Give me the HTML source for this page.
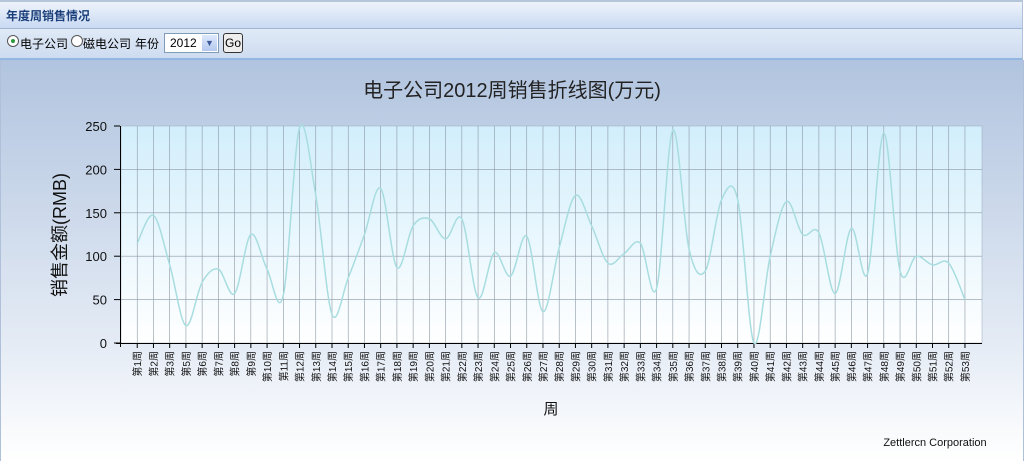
<!DOCTYPE html>
<html><head><meta charset="utf-8"><style>
body{margin:0;width:1024px;height:461px;overflow:hidden;font-family:"Liberation Sans","Noto Sans CJK SC",sans-serif;background:#fff;position:relative}
#hd{position:absolute;left:0;top:0;width:1022px;height:26px;background:linear-gradient(#eef3fb,#c9daf2);border-top:2px solid #b6c6da;border-bottom:1px solid #9fb5d2;border-right:1px solid #b0c0d8}
#hd span{position:absolute;left:6px;top:5px;font-size:12px;font-weight:bold;color:#1b3f7a}
#ctl{position:absolute;left:0;top:29px;width:1022px;height:29px;background:linear-gradient(#e0eaf7,#cedcf0);border-bottom:2px solid #94b6e2;border-right:1px solid #b0c0d8;font-size:12px;color:#000}
#ch{position:absolute;left:0;top:60px;width:1022px;height:401px;background:linear-gradient(#b1c4df,#e4ebf5 70%,#fff);border-left:1px solid #b0c0d8;border-right:1px solid #b0c0d8}
</style></head><body>
<div id="hd"><span>年度周销售情况</span></div>
<div id="ctl">
<div style="position:absolute;left:7px;top:6px;width:10px;height:10px;border:1px solid #555;border-radius:50%;background:#fff"><div style="position:absolute;left:3px;top:3px;width:4px;height:4px;border-radius:50%;background:#2a9a3a"></div></div>
<span style="position:absolute;left:20px;top:6px">电子公司</span>
<div style="position:absolute;left:71px;top:6px;width:10px;height:10px;border:1px solid #555;border-radius:50%;background:#fff"></div>
<span style="position:absolute;left:83px;top:6px">磁电公司</span>
<span style="position:absolute;left:135px;top:6px">年份</span>
<div style="position:absolute;left:164px;top:4px;width:53px;height:18px;border:1px solid #7f9db9;background:#fff"><span style="position:absolute;left:5px;top:2px">2012</span><div style="position:absolute;right:1px;top:1px;width:15px;height:16px;background:linear-gradient(#dde8fb,#b5c9ef);color:#3d5b9b;font-size:9px;text-align:center;line-height:16px">▼</div></div>
<div style="position:absolute;left:223px;top:4px;width:18px;height:18px;border:1px solid #333;border-radius:3px;background:#eee;text-align:center;line-height:18px">Go</div>
</div>
<div id="ch"></div>
<svg id="s" width="1024" height="461" style="position:absolute;left:0;top:0">
<defs><linearGradient id="pg" x1="0" y1="0" x2="0" y2="1"><stop offset="0" stop-color="#d2eefc"/><stop offset="1" stop-color="#fff"/></linearGradient></defs>
<rect x="121" y="126" width="861" height="217" fill="url(#pg)" stroke="#9ab" stroke-width="0.5"/>
<g id="g"></g>
<text x="512" y="97" text-anchor="middle" font-size="20" fill="#222" font-family="Liberation Sans,Noto Sans CJK SC,sans-serif">电子公司2012周销售折线图(万元)</text>
<text transform="translate(66,235) rotate(-90)" text-anchor="middle" font-size="18" fill="#111" font-family="Liberation Sans,Noto Sans CJK SC,sans-serif">销售金额(RMB)</text>
<text x="551" y="414" text-anchor="middle" font-size="15" fill="#111" font-family="Noto Sans CJK SC,sans-serif">周</text>
<text x="935" y="446" text-anchor="middle" font-size="11" fill="#111" font-family="Liberation Sans,sans-serif">Zettlercn Corporation</text>
</svg>
<script>
(function(){
var g=document.getElementById('g'),h='';
var x0=121,step=16.23,T=126,B=343;
function Y(v){return B-v*(B-T)/250;}
for(var i=1;i<=52;i++){var x=x0+step*i;if(x<982)h+='<line x1="'+x+'" y1="126" x2="'+x+'" y2="343" stroke="#8c99a5" stroke-width="0.6"/>';}
for(var v=50;v<=200;v+=50)h+='<line x1="121" y1="'+Y(v)+'" x2="982" y2="'+Y(v)+'" stroke="#8c99a5" stroke-width="0.6"/>';
h+='<line x1="120.5" y1="126" x2="120.5" y2="347" stroke="#000"/><line x1="116" y1="343.5" x2="982" y2="343.5" stroke="#000"/>';
for(var v=0;v<=250;v+=50){var y=Y(v);h+='<line x1="114" y1="'+y+'" x2="120" y2="'+y+'" stroke="#000"/><text x="107" y="'+(y+5)+'" text-anchor="end" font-size="13" fill="#111" font-family="Liberation Sans,sans-serif">'+v+'</text>';}
var wk=[1,2,3];for(var i=5;i<=53;i++)wk.push(i);
var d=[115,147,90,20,70,85,57,125,85,55,248,170,33,75,125,178,87,135,143,120,143,52,104,77,123,36,110,170,135,92,103,115,63,245,108,83,165,165,0,100,163,125,127,57,132,80,242,83,100,90,92,50];
var pts=[];
for(var i=0;i<52;i++){var x=x0+step*(i+1);pts.push([x,Y(d[i])]);
h+='<line x1="'+x+'" y1="343" x2="'+x+'" y2="348" stroke="#000"/>';
h+='<text transform="translate('+(x+4)+',351) rotate(-90)" text-anchor="end" font-size="10" fill="#111" font-family="Liberation Sans,Noto Sans CJK SC,sans-serif">第'+wk[i]+'周</text>';}
var p='M'+pts[0][0]+','+pts[0][1];
for(var i=0;i<pts.length-1;i++){var a=pts[i-1]||pts[i],b=pts[i],c=pts[i+1],e=pts[i+2]||c;
p+=' C'+(b[0]+(c[0]-a[0])/6)+','+(b[1]+(c[1]-a[1])/6)+' '+(c[0]-(e[0]-b[0])/6)+','+(c[1]-(e[1]-b[1])/6)+' '+c[0]+','+c[1];}
h+='<path d="'+p+'" fill="none" stroke="#a8dde0" stroke-width="1.5"/>';
g.innerHTML=h;
})();
</script>
</body></html>
